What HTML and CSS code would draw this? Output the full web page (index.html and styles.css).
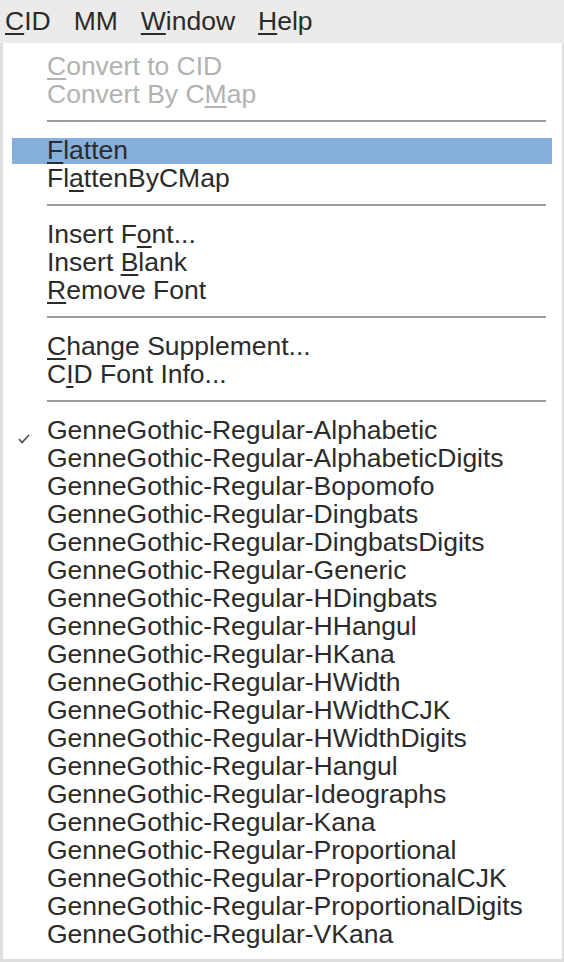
FILE: index.html
```html
<!DOCTYPE html>
<html>
<head>
<meta charset="utf-8">
<link rel="stylesheet" href="styles.css">
</head>
<body>
<div class="menubar">
  <span class="mb-item"><u>C</u>ID</span>
  <span class="mb-item">MM</span>
  <span class="mb-item"><u>W</u>indow</span>
  <span class="mb-item"><u>H</u>elp</span>
</div>
<div class="panel">
  <div class="item disabled"><u>C</u>onvert to CID</div>
  <div class="item disabled">Convert By C<u>M</u>ap</div>
  <div class="sep"></div>
  <div class="item active"><u>F</u>latten</div>
  <div class="item">Fl<u>a</u>ttenByCMap</div>
  <div class="sep"></div>
  <div class="item">Insert F<u>o</u>nt...</div>
  <div class="item">Insert <u>B</u>lank</div>
  <div class="item"><u>R</u>emove Font</div>
  <div class="sep"></div>
  <div class="item"><u>C</u>hange Supplement...</div>
  <div class="item">C<u>I</u>D Font Info...</div>
  <div class="sep"></div>
  <div class="item checked"><svg class="check" width="12" height="10" viewBox="0 0 12 10"><polyline points="1,5 4,8.5 11,1" fill="none" stroke="#4a4a4a" stroke-width="1.6"/></svg>GenneGothic-Regular-Alphabetic</div>
  <div class="item">GenneGothic-Regular-AlphabeticDigits</div>
  <div class="item">GenneGothic-Regular-Bopomofo</div>
  <div class="item">GenneGothic-Regular-Dingbats</div>
  <div class="item">GenneGothic-Regular-DingbatsDigits</div>
  <div class="item">GenneGothic-Regular-Generic</div>
  <div class="item">GenneGothic-Regular-HDingbats</div>
  <div class="item">GenneGothic-Regular-HHangul</div>
  <div class="item">GenneGothic-Regular-HKana</div>
  <div class="item">GenneGothic-Regular-HWidth</div>
  <div class="item">GenneGothic-Regular-HWidthCJK</div>
  <div class="item">GenneGothic-Regular-HWidthDigits</div>
  <div class="item">GenneGothic-Regular-Hangul</div>
  <div class="item">GenneGothic-Regular-Ideographs</div>
  <div class="item">GenneGothic-Regular-Kana</div>
  <div class="item">GenneGothic-Regular-Proportional</div>
  <div class="item">GenneGothic-Regular-ProportionalCJK</div>
  <div class="item">GenneGothic-Regular-ProportionalDigits</div>
  <div class="item">GenneGothic-Regular-VKana</div>
</div>
</body>
</html>
```
FILE: styles.css
```css
html, body {
  margin: 0;
  padding: 0;
}
body {
  width: 564px;
  height: 962px;
  background: #ecebe9;
  font-family: "Liberation Sans", Arial, sans-serif;
  font-size: 26.5px;
  color: #2b2b2b;
  overflow: hidden;
}
u {
  text-decoration: underline;
  text-decoration-thickness: 2px;
  text-underline-offset: 3px;
}
.menubar {
  height: 43px;
  line-height: 43px;
  display: flex;
  gap: 23px;
  padding-left: 5px;
  background: #ecebe9;
}
.mb-item {
  white-space: nowrap;
}
.panel {
  box-sizing: border-box;
  height: 919px;
  background: #ffffff;
  border-left: 3px solid #dedede;
  border-right: 2px solid #dedede;
  border-bottom: 3px solid #dedede;
  padding: 10px 10px 10px 9px;
  display: flex;
  flex-direction: column;
}
.item {
  position: relative;
  line-height: 22px;
  padding: 1px 0 3px 35px;
  border-top: 1px solid transparent;
  border-bottom: 1px solid transparent;
  background-clip: padding-box;
  white-space: nowrap;
}
.item.disabled {
  color: #b2b2b2;
}
.item.active {
  background-color: #86afdb;
}
.sep {
  height: 2px;
  background: #9a9a9a;
  margin: 11px 6px 15px 35px;
}
.check {
  position: absolute;
  left: 6px;
  top: 16px;
}
```
